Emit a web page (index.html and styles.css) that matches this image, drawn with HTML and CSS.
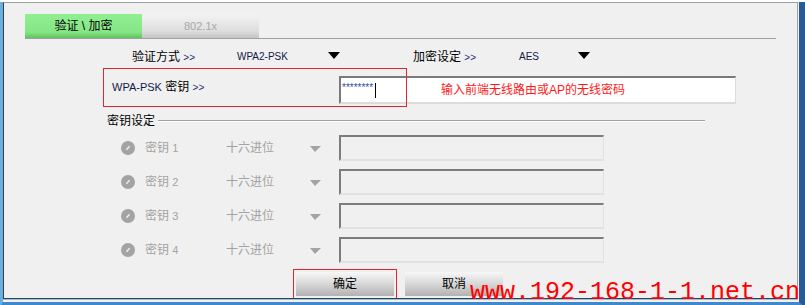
FILE: index.html
```html
<!DOCTYPE html>
<html>
<head>
    <title>验证 \ 加密</title>
    <link rel="stylesheet" href="styles.css">
</head>
<body>
    <div class="frame">
        <div class="panel">
            <div class="tabs">
                <div class="tab tab-active">验证 \ 加密</div>
                <div class="tab tab-off">802.1x</div>
            </div>

            <div class="auth-row">
                <span class="field-label label-auth">验证方式 <span class="arrows">&gt;&gt;</span></span>
                <span class="select-value val-auth">WPA2-PSK</span>
                <span class="drop drop-gap"></span>
                <span class="field-label label-enc">加密设定 <span class="arrows">&gt;&gt;</span></span>
                <span class="select-value val-enc">AES</span>
                <span class="drop"></span>
            </div>

            <div class="psk-row">
                <div class="psk-label"><span class="latin">WPA-PSK</span> 密钥 <span class="arrows">&gt;&gt;</span></div>
                <div class="psk-input">
                    <div class="psk-value"><span class="stars">********</span><span class="caret"></span></div>
                    <span class="note">输入前端无线路由或AP的无线密码</span>
                </div>
                <div class="mark"></div>
            </div>

            <div class="group-title">
                <span>密钥设定</span>
                <span class="group-line"></span>
            </div>

            <div class="keys">
                <div class="key-row">
                    <svg class="radio" width="14" height="14" viewBox="0 0 14 14"><circle cx="7" cy="7" r="7" fill="#a3a3a3"/><path d="M5.4 8.8 L8.6 5.2" stroke="#ededed" stroke-width="1.5"/></svg>
                    <span class="key-label">密钥 <span class="num">1</span></span>
                    <span class="key-type">十六进位</span>
                    <span class="drop drop-dim"></span>
                    <div class="key-input"></div>
                </div>
                <div class="key-row">
                    <svg class="radio" width="14" height="14" viewBox="0 0 14 14"><circle cx="7" cy="7" r="7" fill="#a3a3a3"/><path d="M5.4 8.8 L8.6 5.2" stroke="#ededed" stroke-width="1.5"/></svg>
                    <span class="key-label">密钥 <span class="num">2</span></span>
                    <span class="key-type">十六进位</span>
                    <span class="drop drop-dim"></span>
                    <div class="key-input"></div>
                </div>
                <div class="key-row">
                    <svg class="radio" width="14" height="14" viewBox="0 0 14 14"><circle cx="7" cy="7" r="7" fill="#a3a3a3"/><path d="M5.4 8.8 L8.6 5.2" stroke="#ededed" stroke-width="1.5"/></svg>
                    <span class="key-label">密钥 <span class="num">3</span></span>
                    <span class="key-type">十六进位</span>
                    <span class="drop drop-dim"></span>
                    <div class="key-input"></div>
                </div>
                <div class="key-row">
                    <svg class="radio" width="14" height="14" viewBox="0 0 14 14"><circle cx="7" cy="7" r="7" fill="#a3a3a3"/><path d="M5.4 8.8 L8.6 5.2" stroke="#ededed" stroke-width="1.5"/></svg>
                    <span class="key-label">密钥 <span class="num">4</span></span>
                    <span class="key-type">十六进位</span>
                    <span class="drop drop-dim"></span>
                    <div class="key-input"></div>
                </div>
            </div>

            <div class="buttons">
                <div class="btn-wrap">
                    <div class="btn">确定</div>
                    <div class="btn-mark"></div>
                </div>
                <div class="btn">取消</div>
            </div>
        </div>
        <div class="watermark">www.192-168-1-1.net.cn</div>
    </div>
</body>
</html>
```

FILE: styles.css
```css
body {
    margin: 0;
    width: 805px;
    height: 305px;
    overflow: hidden;
    font-family: "Liberation Sans", "Noto Sans CJK SC", sans-serif;
    font-size: 12px;
    line-height: 16px;
    color: #000;
}
.frame {
    position: relative;
    width: 805px;
    height: 305px;
    box-sizing: border-box;
    background: #f0f0f0;
    border-left: 3px solid #67b0e3;
    border-right: 6px solid #2a5a93;
    border-bottom: 5px solid #3f88cc;
}
.panel {
    margin: 2px 1px 0 0;
    height: 297px;
    box-sizing: border-box;
    overflow: hidden;
    border-top: 1px solid #a0a0a0;
    border-left: 1px solid #3d3d3d;
    border-right: 1px solid #a0a0a0;
    border-bottom: 1px solid #3d3d3d;
    box-shadow: 0 1px 0 #8ec4ec;
}

/* tabs */
.tabs {
    display: flex;
    width: 751px;
    margin: 11px 0 0 21px;
    border-bottom: 1px solid #a0a0a0;
}
.tab {
    width: 117px;
    height: 24px;
    line-height: 24px;
    text-align: center;
}
.tab-active {
    background: linear-gradient(#90ef90, #86e686 75%, #5cc45c);
}
.tab-off {
    color: #a8a8a8;
    font-size: 11px;
    background: linear-gradient(#f3f3f3, #dedede 70%, #c4c4c4);
}

/* first row */
.auth-row {
    display: flex;
    align-items: center;
    height: 20px;
    margin-top: 8px;
    padding-left: 128px;
}
.field-label {
    flex: none;
}
.label-auth { width: 105px; }
.label-enc { width: 106px; }
.arrows {
    font-size: 10px;
    color: #1e2a6e;
}
.select-value {
    font-size: 10px;
    color: #141a48;
}
.val-auth { width: 91px; }
.val-enc { width: 59px; }
.drop {
    flex: none;
    width: 0;
    height: 0;
    border-left: 6px solid transparent;
    border-right: 6px solid transparent;
    border-top: 7px solid #000;
    margin-bottom: 3px;
}
.drop-gap {
    margin-right: 73px;
}

/* psk row */
.psk-row {
    position: relative;
    display: flex;
    align-items: center;
    height: 39px;
    margin: 1px 0 0 99px;
}
.psk-label {
    width: 236px;
    padding-left: 9px;
    box-sizing: border-box;
}
.latin {
    font-size: 11px;
    color: #141a48;
}
.psk-input {
    display: flex;
    align-items: center;
    align-self: flex-start;
    margin-top: 8px;
    width: 397px;
    height: 28px;
    box-sizing: border-box;
    background: #fff;
    border-top: 2px solid #7a7a7a;
    border-left: 2px solid #7a7a7a;
    border-right: 1px solid #dcdcdc;
    border-bottom: 2px solid #dcdcdc;
}
.psk-value {
    display: flex;
    align-items: center;
    width: 100px;
    padding-left: 1px;
    box-sizing: border-box;
}
.stars {
    font-size: 10px;
    color: #2d4f9e;
    margin-top: -4px;
}
.caret {
    width: 1px;
    height: 15px;
    margin-left: 2px;
    background: #000;
}
.note {
    color: #ff1a1a;
}
.mark {
    position: absolute;
    left: 0;
    top: 0;
    width: 304px;
    height: 39px;
    box-sizing: border-box;
    border: 1px solid #e3262b;
}

/* key settings */
.group-title {
    display: flex;
    align-items: center;
    height: 16px;
    margin: 6px 0 0 103px;
}
.group-line {
    width: 547px;
    margin-left: 3px;
    border-top: 1px solid #a0a0a0;
    border-bottom: 1px solid #fff;
}
.keys {
    display: flex;
    flex-direction: column;
    gap: 8px;
    margin: 6px 0 0 117px;
}
.key-row {
    display: flex;
    align-items: center;
    height: 26px;
    color: #a3a3a3;
}
.radio {
    flex: none;
    margin-right: 10px;
}
.key-label { width: 81px; }
.key-type { width: 84px; }
.num { font-size: 11px; }
.drop-dim {
    border-left-width: 5px;
    border-right-width: 6px;
    border-top: 6px solid #a3a3a3;
    margin: 2px 18px 0 0;
}
.key-input {
    width: 265px;
    height: 26px;
    box-sizing: border-box;
    border-top: 2px solid #7c7c7c;
    border-left: 2px solid #7c7c7c;
    border-right: 1px solid #e2e2e2;
    border-bottom: 2px solid #e2e2e2;
}

/* buttons */
.buttons {
    display: flex;
    gap: 11px;
    margin: 9px 0 0 292px;
}
.btn-wrap {
    position: relative;
}
.btn {
    width: 98px;
    height: 24px;
    line-height: 24px;
    text-align: center;
    background: linear-gradient(#f7f7f7, #dadada 45%, #b2b2b2);
}
.btn-mark {
    position: absolute;
    left: -3px;
    top: -3px;
    right: -3px;
    bottom: -3px;
    border: 1px solid #e3262b;
}
.watermark {
    position: absolute;
    left: 467px;
    top: 282px;
    font-family: "Liberation Mono", monospace;
    font-size: 25px;
    line-height: 18px;
    color: #ff0000;
    white-space: nowrap;
}
```
